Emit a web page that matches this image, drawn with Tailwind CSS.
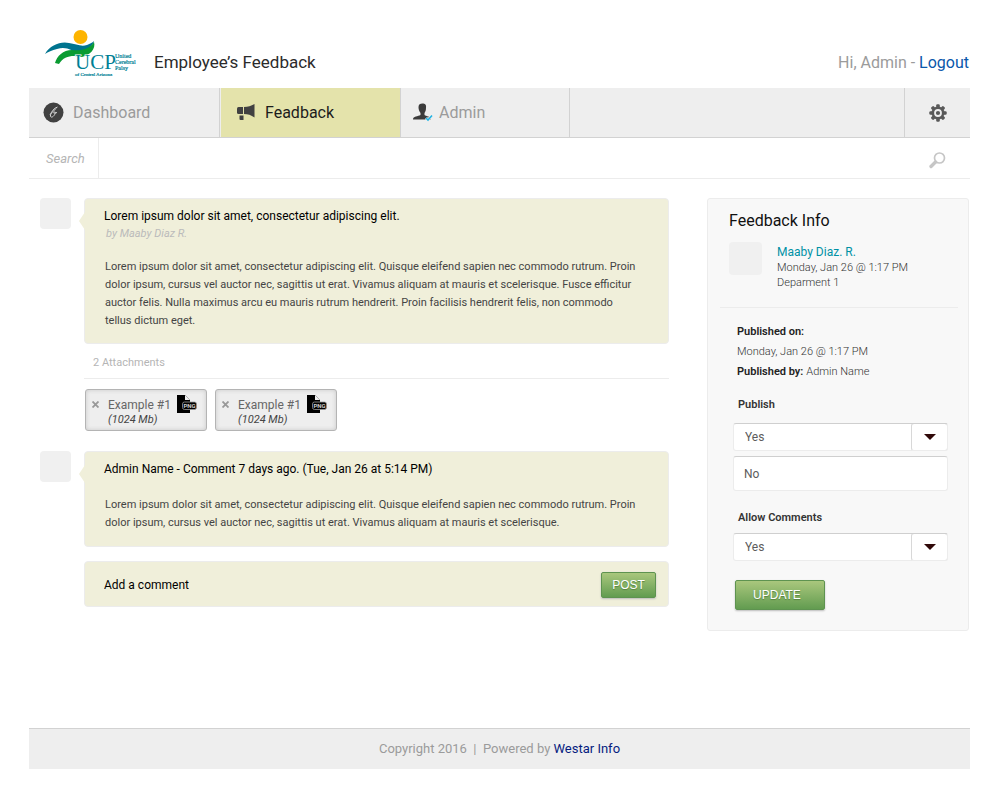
<!DOCTYPE html>
<html lang="en">
<head>
<meta charset="utf-8">
<meta name="viewport" content="width=device-width, initial-scale=1">
<title>Employee's Feedback</title>
<script src="https://cdn.jsdelivr.net/npm/@tailwindcss/browser@4"></script>
</head>
<body class="flex min-h-screen flex-col bg-white pr-[30px] pb-[23px] pl-[29px] font-['Roboto',sans-serif] text-[#444]">

<header class="flex h-[88px] shrink-0 items-end justify-between">
  <div class="flex items-end gap-[17px] pl-4">
    <svg class="mb-[10px]" width="92" height="49" viewBox="0 0 92 49" role="img" aria-label="UCP, United Cerebral Palsy of Central Arizona">
      <circle cx="35.500" cy="8" r="7" fill="#fdb400"/>
      <path d="M0 25C5 16 16 12 24 14C31 15 36 18 42 16C45 15 48 13 49 12C49 15 44 20 38 22L34 26C27 21 21 17 12 20C7 21 3 23 0 25Z" fill="#00748f"/>
      <path d="M10 34C12 27 18 21 27 21C36 22 45 20 49 13C51 20 45 26 37 28C27 26 19 27 14 35Z" fill="#0a9b32"/>
      <text x="30" y="40" font-family="Liberation Serif, serif" font-size="21" fill="#007f95" stroke="#fff" stroke-width="1" paint-order="stroke">UCP</text>
      <g font-family="Liberation Serif, serif" font-size="6" fill="#007f95" stroke="#007f95" stroke-width=".2">
        <text x="70" y="29">United</text>
        <text x="70" y="35">Cerebral</text>
        <text x="70" y="41">Palsy</text>
      </g>
      <text x="30" y="47" font-family="Liberation Serif, serif" font-size="5" fill="#007f95" stroke="#007f95" stroke-width=".2">of Central Arizona</text>
    </svg>
    <h1 class="mb-[14px] text-[17px] leading-6 text-[#2b2b2b]">Employee’s Feedback</h1>
  </div>
  <p class="mb-[13px] pr-px text-base leading-6 text-[#9b9b9b]">Hi, Admin - <a href="#" class="text-[#0a57ab]">Logout</a></p>
</header>

<nav class="flex h-[50px] shrink-0 border-b border-[#d2d2d2] bg-[#eee] text-base text-[#9b9b9b]">
  <a href="#" class="flex w-[191px] items-center gap-[9px] border-r border-[#d2d2d2] pl-[14px]">
    <svg width="21" height="21" viewBox="0 0 21 21" aria-hidden="true">
      <circle cx="10.500" cy="10.500" r="10" fill="#414141"/>
      <path d="M14.500 5C11 6 8 10 7.500 13C7 16 9.500 15.500 11 13.500C12.500 11.500 13 9.500 11.500 10C10 10.500 10 12 14 10.500M7 12.500L13 6.500" fill="none" stroke="#d5d5d5" stroke-width="1"/>
    </svg>
    Dashboard
  </a>
  <a href="#" class="ml-px flex w-[180px] items-center gap-[10px] border-r border-[#d2d2d2] bg-[#e4e3ab] pl-4 text-[#1c1c1c]" aria-current="page">
    <svg class="mb-[2px]" width="18" height="18" viewBox="0 0 18 18" fill="#414141" aria-hidden="true">
      <path d="M1.500 4H6V11H1.500Q0 11 0 9.500V5.500Q0 4 1.500 4Z"/>
      <path d="M7 4C11 4 14 3 17.500 1V14.500C14 12 11 11 7 11Z"/>
      <path d="M2.500 12.500H6.500V17H3.500Q2.500 17 2.500 16Z"/>
    </svg>
    Feadback
  </a>
  <a href="#" class="flex w-[169px] items-center gap-[6px] border-r border-[#d2d2d2] pl-3">
    <svg width="20" height="19" viewBox="0 0 20 19" aria-hidden="true">
      <path d="M5.500 4C5.500 1.500 7 .5 9.500 .5C12 .5 13.500 1.500 13 5C13 8 12 9 11.500 10V12C13 13.500 18 13 18 16.500H0C0 13 5 13.500 7.500 12V10C6 8 5.500 6 5.500 4Z" fill="#3b3b3b"/>
      <path d="M13 15L15 17L19 12.500" fill="none" stroke="#eee" stroke-width="3"/>
      <path d="M13 15L15 17L19 12.500" fill="none" stroke="#22b3e3" stroke-width="1.600"/>
    </svg>
    Admin
  </a>
  <button type="button" aria-label="Settings" class="ml-auto flex w-[66px] items-center justify-center border-l border-[#d2d2d2]">
    <svg width="18" height="18" viewBox="-9 -9 18 18" fill="#595959" aria-hidden="true">
      <g id="tooth"><rect x="-1.800" y="-8.700" width="3.600" height="17.400" rx="1.200"/><rect x="-8.700" y="-1.800" width="17.400" height="3.600" rx="1.200"/></g>
      <use href="#tooth" transform="rotate(45)"/>
      <circle r="6.500"/>
      <circle r="3" fill="none" stroke="#eee" stroke-width="1.800"/>
    </svg>
  </button>
</nav>

<form class="flex h-[41px] shrink-0 items-stretch border-b border-[#ececec]">
  <label for="search" class="flex w-[70px] items-center border-r border-[#ececec] pt-px pl-[17px] text-[13px] text-[#b5b5b5] italic">Search</label>
  <input id="search" type="search" class="min-w-0 flex-1 px-3 text-[13px] outline-none">
  <button type="submit" aria-label="Search" class="flex w-[66px] items-center justify-center pt-1">
    <svg width="18" height="17" viewBox="0 0 18 17" fill="none" stroke="#c6c6c6" aria-hidden="true">
      <circle cx="11.500" cy="6" r="5" stroke-width="1.700"/>
      <path d="M7.500 10L3 14.500" stroke-width="3.400" stroke-linecap="round"/>
    </svg>
  </button>
</form>

<div class="flex items-start gap-[38px] pt-[19px] pr-px pl-[11px]">
  <main class="min-w-0 flex-1">
    <article class="flex items-start gap-[13px]">
      <div class="size-[31px] shrink-0 rounded bg-[#f0f0f0]"></div>
      <div class="relative min-w-0 flex-1 rounded border border-[#ececec] bg-[#f0efda] px-5 pt-[7px] pb-[13px]">
        <svg class="absolute top-[13px] -left-[6px]" width="6" height="18" viewBox="0 0 6 18" aria-hidden="true"><path d="M6 0L0 9L6 18Z" fill="#f0efda"/></svg>
        <h2 class="-ml-px text-xs leading-5 text-black">Lorem ipsum dolor sit amet, consectetur adipiscing elit.</h2>
        <p class="pl-px text-[11px] leading-4 text-[#bbb] italic">by Maaby Diaz R.</p>
        <p class="mt-4 pr-2 text-[11px] leading-[18px]">Lorem ipsum dolor sit amet, consectetur adipiscing elit. Quisque eleifend sapien nec commodo rutrum. Proin dolor ipsum, cursus vel auctor nec, sagittis ut erat. Vivamus aliquam at mauris et scelerisque. Fusce efficitur auctor felis. Nulla maximus arcu eu mauris rutrum hendrerit. Proin facilisis hendrerit felis, non commodo tellus dictum eget.</p>
      </div>
    </article>

    <section class="ml-11">
      <h3 class="border-b border-[#ececec] pt-[11px] pb-[7px] pl-[9px] text-[11px] leading-4 text-[#b5b5b5]">2 Attachments</h3>
      <ul class="flex gap-2 pt-[10px] pl-px">
        <li class="flex h-[42px] w-[122px] items-start rounded-[3px] border border-[#b4b4b4] bg-[#eee] pt-[5px] pl-[6px] shadow-[inset_0_0_4px_#c8c8c8]">
          <button type="button" aria-label="Remove attachment" class="mt-[6px] mr-[9px]">
            <svg width="7" height="7" viewBox="0 0 7 7" aria-hidden="true"><path d="M.5 .5L6.500 6.500M6.500 .5L.5 6.500" stroke="#999" stroke-width="1.800"/></svg>
          </button>
          <p class="text-xs leading-5 text-[#666]">Example #1<span class="block text-[11px] leading-[9px] text-[#444] italic">(1024 Mb)</span></p>
          <svg class="ml-[6px]" width="20" height="18" viewBox="0 0 20 18" role="img" aria-label="PNG file">
            <path d="M0 0H8L13 5V18H0Z"/><path d="M8 0V5H13Z" fill="#eee"/>
            <rect x="5.500" y="7" width="14" height="7.500" rx="2" stroke="#999" stroke-width=".8"/>
            <text x="12.500" y="13" text-anchor="middle" font-family="Roboto, sans-serif" font-size="6" font-weight="bold" fill="#ccc">PNG</text>
          </svg>
        </li>
        <li class="flex h-[42px] w-[122px] items-start rounded-[3px] border border-[#b4b4b4] bg-[#eee] pt-[5px] pl-[6px] shadow-[inset_0_0_4px_#c8c8c8]">
          <button type="button" aria-label="Remove attachment" class="mt-[6px] mr-[9px]">
            <svg width="7" height="7" viewBox="0 0 7 7" aria-hidden="true"><path d="M.5 .5L6.500 6.500M6.500 .5L.5 6.500" stroke="#999" stroke-width="1.800"/></svg>
          </button>
          <p class="text-xs leading-5 text-[#666]">Example #1<span class="block text-[11px] leading-[9px] text-[#444] italic">(1024 Mb)</span></p>
          <svg class="ml-[6px]" width="20" height="18" viewBox="0 0 20 18" role="img" aria-label="PNG file">
            <path d="M0 0H8L13 5V18H0Z"/><path d="M8 0V5H13Z" fill="#eee"/>
            <rect x="5.500" y="7" width="14" height="7.500" rx="2" stroke="#999" stroke-width=".8"/>
            <text x="12.500" y="13" text-anchor="middle" font-family="Roboto, sans-serif" font-size="6" font-weight="bold" fill="#ccc">PNG</text>
          </svg>
        </li>
      </ul>
    </section>

    <article class="mt-5 flex items-start gap-[13px]">
      <div class="size-[31px] shrink-0 rounded bg-[#f0f0f0]"></div>
      <div class="relative min-w-0 flex-1 rounded border border-[#ececec] bg-[#f0efda] px-5 pt-[7px] pb-[14px]">
        <svg class="absolute top-[13px] -left-[6px]" width="6" height="18" viewBox="0 0 6 18" aria-hidden="true"><path d="M6 0L0 9L6 18Z" fill="#f0efda"/></svg>
        <h2 class="-ml-px text-xs leading-5 text-black">Admin Name - Comment 7 days ago. (Tue, Jan 26 at 5:14 PM)</h2>
        <p class="mt-[17px] pr-2 text-[11px] leading-[18px]">Lorem ipsum dolor sit amet, consectetur adipiscing elit. Quisque eleifend sapien nec commodo rutrum. Proin dolor ipsum, cursus vel auctor nec, sagittis ut erat. Vivamus aliquam at mauris et scelerisque.</p>
      </div>
    </article>

    <form class="mt-[14px] ml-11 flex h-[46px] items-center rounded border border-[#ececec] bg-[#f0efda] pt-px pr-3 pl-[19px]">
      <input type="text" aria-label="Add a comment" placeholder="Add a comment" class="min-w-0 flex-1 text-xs text-black outline-none placeholder:text-black">
      <button type="submit" class="h-[26px] w-[55px] rounded-[2px] border border-[#5e9350] bg-linear-to-b from-[#a9c77d] to-[#629c50] font-['Liberation_Sans',sans-serif] text-xs text-white shadow-[0_1px_2px_#bbb] text-shadow-[0_1px_1px_#55803f]">POST</button>
    </form>
  </main>

  <aside class="w-[262px] shrink-0 rounded-[3px] border border-[#ececec] bg-[#f8f8f8] pt-[10px] pb-5">
    <h2 class="pl-[21px] text-base leading-6 text-[#111]">Feedback Info</h2>
    <div class="mr-[10px] ml-3 flex gap-[15px] border-b border-[#ececec] pt-[9px] pb-[17px] pl-[9px]">
      <div class="size-[33px] shrink-0 rounded bg-[#f0f0f0]"></div>
      <div class="pt-[2px] text-[11px] leading-[15px] font-light text-[#333]">
        <a href="#" class="block text-xs leading-4 font-normal text-[#0091a5]">Maaby Diaz. R.</a>
        <p>Monday, Jan 26 @ 1:17 PM</p>
        <p>Deparment 1</p>
      </div>
    </div>
    <dl class="pt-[14px] pl-[29px] text-[11px] leading-5 font-light text-[#333]">
      <dt class="font-semibold text-[#222]">Published on:</dt>
      <dd>Monday, Jan 26 @ 1:17 PM</dd>
      <div class="flex gap-[3px]"><dt class="font-semibold text-[#222]">Published by:</dt><dd>Admin Name</dd></div>
    </dl>
    <form class="pt-[15px] pr-5 pl-[25px]">
      <label for="publish" class="block pl-[5px] text-[11px] leading-4 font-semibold text-[#333]">Publish</label>
      <div class="relative mt-[10px]">
        <select id="publish" class="block h-7 w-full appearance-none rounded-[3px] border border-[#ececec] border-t-[#cfcfcf] bg-white px-[11px] text-xs text-[#5c5c5c]"><option>Yes</option><option>No</option></select>
        <span class="pointer-events-none absolute inset-y-0 right-0 flex w-[37px] items-center justify-center rounded-[3px] border border-[#ececec] border-t-[#cfcfcf] border-l-[#d8d8d8]">
          <svg width="12" height="6" viewBox="0 0 12 6" fill="#300808" aria-hidden="true"><path d="M0 0H12L6 6Z"/></svg>
        </span>
      </div>
      <button type="button" class="mt-[5px] block h-[35px] w-full rounded-[3px] border border-[#ececec] border-t-[#cfcfcf] bg-white px-[10px] text-left text-xs text-[#5c5c5c]">No</button>
      <label for="comments" class="mt-[19px] block pl-[5px] text-[11px] leading-4 font-semibold text-[#333]">Allow Comments</label>
      <div class="relative mt-[7px]">
        <select id="comments" class="block h-7 w-full appearance-none rounded-[3px] border border-[#ececec] border-t-[#cfcfcf] bg-white px-[11px] text-xs text-[#5c5c5c]"><option>Yes</option><option>No</option></select>
        <span class="pointer-events-none absolute inset-y-0 right-0 flex w-[37px] items-center justify-center rounded-[3px] border border-[#ececec] border-t-[#cfcfcf] border-l-[#d8d8d8]">
          <svg width="12" height="6" viewBox="0 0 12 6" fill="#300808" aria-hidden="true"><path d="M0 0H12L6 6Z"/></svg>
        </span>
      </div>
      <button type="submit" class="mt-[19px] ml-[2px] block h-[30px] w-[90px] rounded-[2px] border border-[#5e9350] bg-linear-to-b from-[#a9c77d] to-[#629c50] pr-[6px] font-['Liberation_Sans',sans-serif] text-xs text-white shadow-[0_1px_2px_#bbb] text-shadow-[0_1px_1px_#55803f]">UPDATE</button>
    </form>
  </aside>
</div>

<footer class="mt-auto flex h-[41px] shrink-0 items-center justify-center border-t border-[#d2d2d2] bg-[#eee] text-[13px] text-[#9b9b9b]">
  <p>Copyright 2016 &nbsp;|&nbsp; Powered by <a href="#" class="text-[#061c80]">Westar Info</a></p>
</footer>
</body>
</html>
